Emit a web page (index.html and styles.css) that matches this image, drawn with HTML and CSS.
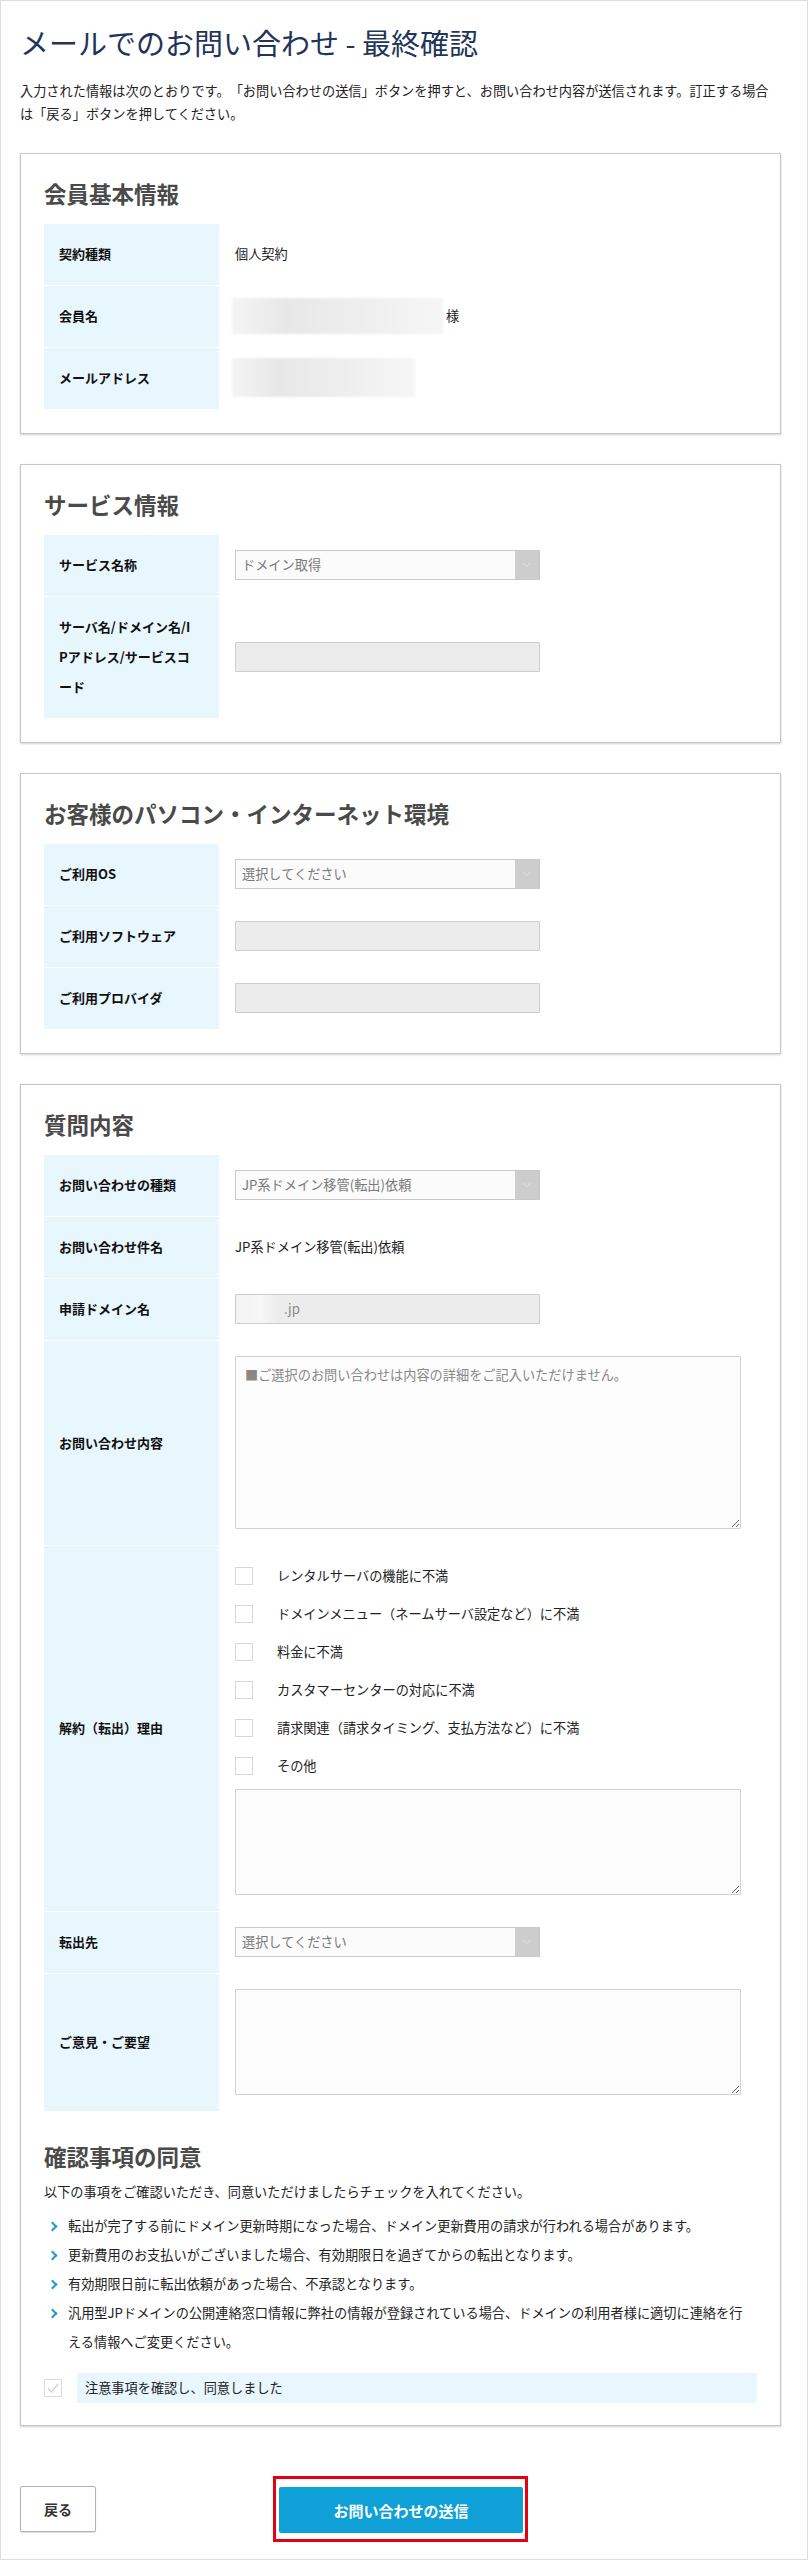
FILE: index.html
```html
<!DOCTYPE html>
<html lang="ja">
<head>
    <meta charset="UTF-8">
    <meta name="viewport" content="width=device-width, initial-scale=1.0">
    <title>メールでのお問い合わせ - 最終確認</title>
    <link rel="stylesheet" href="styles.css">
</head>
<body>
<div class="page">
    <h1 class="page-title">メールでのお問い合わせ - 最終確認</h1>
    <p class="lead">入力された情報は次のとおりです。「お問い合わせの送信」ボタンを押すと、お問い合わせ内容が送信されます。訂正する場合は「戻る」ボタンを押してください。</p>

    <section class="panel">
        <h2>会員基本情報</h2>
        <div class="form-table">
            <div class="label">契約種類</div>
            <div class="value">個人契約</div>
            <div class="label">会員名</div>
            <div class="value"><span class="masked masked-name"></span>様</div>
            <div class="label">メールアドレス</div>
            <div class="value"><span class="masked masked-mail"></span></div>
        </div>
    </section>

    <section class="panel">
        <h2>サービス情報</h2>
        <div class="form-table">
            <div class="label">サービス名称</div>
            <div class="value">
                <div class="select"><span class="select-text">ドメイン取得</span><span class="select-arrow"><svg width="24" height="28" viewBox="0 0 24 28"><polyline points="8.5,12 12,15.5 15.5,12" fill="none" stroke="#e4e4e4" stroke-width="1"/></svg></span></div>
            </div>
            <div class="label">サーバ名/ドメイン名/IPアドレス/サービスコード</div>
            <div class="value"><input class="input" type="text" disabled></div>
        </div>
    </section>

    <section class="panel">
        <h2>お客様のパソコン・インターネット環境</h2>
        <div class="form-table">
            <div class="label">ご利用OS</div>
            <div class="value">
                <div class="select"><span class="select-text">選択してください</span><span class="select-arrow"><svg width="24" height="28" viewBox="0 0 24 28"><polyline points="8.5,12 12,15.5 15.5,12" fill="none" stroke="#e4e4e4" stroke-width="1"/></svg></span></div>
            </div>
            <div class="label">ご利用ソフトウェア</div>
            <div class="value"><input class="input" type="text" disabled></div>
            <div class="label">ご利用プロバイダ</div>
            <div class="value"><input class="input" type="text" disabled></div>
        </div>
    </section>

    <section class="panel">
        <h2>質問内容</h2>
        <div class="form-table">
            <div class="label">お問い合わせの種類</div>
            <div class="value">
                <div class="select"><span class="select-text">JP系ドメイン移管(転出)依頼</span><span class="select-arrow"><svg width="24" height="28" viewBox="0 0 24 28"><polyline points="8.5,12 12,15.5 15.5,12" fill="none" stroke="#e4e4e4" stroke-width="1"/></svg></span></div>
            </div>
            <div class="label">お問い合わせ件名</div>
            <div class="value">JP系ドメイン移管(転出)依頼</div>
            <div class="label">申請ドメイン名</div>
            <div class="value">
                <div class="input domain"><span class="masked-domain"></span><span>.jp</span></div>
            </div>
            <div class="label">お問い合わせ内容</div>
            <div class="value">
                <textarea class="textarea textarea-tall" readonly>■ご選択のお問い合わせは内容の詳細をご記入いただけません。</textarea>
            </div>
            <div class="label">解約（転出）理由</div>
            <div class="value stack">
                <ul class="check-list">
                    <li><span class="check"></span>レンタルサーバの機能に不満</li>
                    <li><span class="check"></span>ドメインメニュー（ネームサーバ設定など）に不満</li>
                    <li><span class="check"></span>料金に不満</li>
                    <li><span class="check"></span>カスタマーセンターの対応に不満</li>
                    <li><span class="check"></span>請求関連（請求タイミング、支払方法など）に不満</li>
                    <li><span class="check"></span>その他</li>
                </ul>
                <textarea class="textarea" readonly></textarea>
            </div>
            <div class="label">転出先</div>
            <div class="value">
                <div class="select"><span class="select-text">選択してください</span><span class="select-arrow"><svg width="24" height="28" viewBox="0 0 24 28"><polyline points="8.5,12 12,15.5 15.5,12" fill="none" stroke="#e4e4e4" stroke-width="1"/></svg></span></div>
            </div>
            <div class="label">ご意見・ご要望</div>
            <div class="value"><textarea class="textarea" readonly></textarea></div>
        </div>

        <h2 class="sub-title">確認事項の同意</h2>
        <p class="note">以下の事項をご確認いただき、同意いただけましたらチェックを入れてください。</p>
        <ul class="arrow-list">
            <li>転出が完了する前にドメイン更新時期になった場合、ドメイン更新費用の請求が行われる場合があります。</li>
            <li>更新費用のお支払いがございました場合、有効期限日を過ぎてからの転出となります。</li>
            <li>有効期限日前に転出依頼があった場合、不承認となります。</li>
            <li>汎用型JPドメインの公開連絡窓口情報に弊社の情報が登録されている場合、ドメインの利用者様に適切に連絡を行える情報へご変更ください。</li>
        </ul>
        <div class="agree">
            <span class="agree-box"><svg width="18" height="18" viewBox="0 0 18 18"><polyline points="4,9.5 7.5,13 14,5" fill="none" stroke="#cfcfcf" stroke-width="1.2"/></svg></span>
            <span class="agree-text">注意事項を確認し、同意しました</span>
        </div>
    </section>

    <div class="actions">
        <button class="btn-back" type="button">戻る</button>
        <div class="submit-frame">
            <button class="btn-submit" type="submit">お問い合わせの送信</button>
        </div>
    </div>
</div>
</body>
</html>
```

FILE: styles.css
```css
body {
    margin: 0;
    font-family: "Noto Sans CJK JP", "Noto Sans", sans-serif;
    color: #222;
    background: #fff;
    text-spacing-trim: space-all;
}
.page {
    border: 1px solid #dedede;
    padding: 20px 26px 17px 19px;
}
.page-title {
    margin: 0;
    font-size: 29px;
    font-weight: normal;
    line-height: 42px;
    color: #1f3559;
}
.lead {
    margin: 16px 0 0;
    font-size: 13.2px;
    line-height: 23px;
}
.panel {
    margin-top: 28px;
    padding: 24px 23px 22px;
    border: 1px solid #c6c6c6;
    box-shadow: 0 1px 2px rgba(0, 0, 0, 0.18);
}
.panel + .panel {
    margin-top: 30px;
}
.panel h2 {
    margin: 0 0 16px;
    font-size: 22.5px;
    font-weight: bold;
    line-height: 30px;
    color: #4a4a4a;
}
.panel .form-table:last-child {
    margin-bottom: 2px;
}
.form-table {
    display: grid;
    grid-template-columns: 175px 1fr;
    row-gap: 1px;
}
.label {
    display: flex;
    align-items: center;
    padding: 15px 22px 16px 15px;
    background: #e8f6fd;
    font-size: 13px;
    font-weight: bold;
    line-height: 30px;
    color: #111;
    word-break: break-all;
}
.value {
    display: flex;
    align-items: center;
    padding: 15px 0 16px 16px;
    min-height: 30px;
    font-size: 13.2px;
    line-height: 30px;
}
.value.stack {
    display: block;
    padding-top: 11px;
}
.masked {
    display: inline-block;
    background: linear-gradient(90deg, #f4f4f4 0%, #e8e8e8 25%, #eeeeee 60%, #f6f6f6 100%);
    filter: blur(1px);
}
.masked-name {
    width: 211px;
    height: 36px;
    margin: -3px 3px -3px -3px;
}
.masked-mail {
    width: 183px;
    height: 39px;
    margin: -5px 0 -4px -3px;
}
.select {
    display: flex;
    width: 305px;
    height: 30px;
    box-sizing: border-box;
    border: 1px solid #c9c9c9;
    background: #fbfbfb;
}
.select-text {
    flex: 1;
    padding-left: 6px;
    line-height: 28px;
    font-size: 13.2px;
    color: #7a7a7a;
}
.select-arrow {
    width: 24px;
    background: #cdcdcd;
    line-height: 0;
}
.input {
    display: block;
    width: 305px;
    height: 30px;
    box-sizing: border-box;
    margin: 0;
    border: 1px solid #cdcdcd;
    border-radius: 1px;
    background: #ececec;
}
.domain {
    display: flex;
    align-items: center;
    font-size: 13.2px;
    color: #888;
}
.masked-domain {
    width: 42px;
    height: 100%;
    margin-right: 6px;
    background: linear-gradient(90deg, #f3f3f3, #f7f7f7 60%, #ececec);
}
.textarea {
    display: block;
    width: 506px;
    height: 106px;
    box-sizing: border-box;
    margin: 0;
    padding: 8px 9px;
    border: 1px solid #d0d0d0;
    border-radius: 1px;
    background: #fcfcfc;
    font-family: inherit;
    font-size: 13.2px;
    line-height: 20px;
    color: #888;
    resize: vertical;
}
.textarea-tall {
    height: 173px;
}
.check-list {
    list-style: none;
    margin: 0 0 4px;
    padding: 0;
}
.check-list li {
    display: flex;
    align-items: center;
    height: 38px;
}
.check {
    flex: none;
    width: 18px;
    height: 18px;
    box-sizing: border-box;
    margin-right: 24px;
    border: 1px solid #d8d8d8;
    background: #fff;
}
.panel .sub-title {
    margin: 30px 0 8px;
}
.note {
    margin: 0;
    font-size: 13.2px;
    line-height: 26px;
}
.arrow-list {
    list-style: none;
    margin: 6px 0 0;
    padding: 0 8px 0 0;
}
.arrow-list li {
    display: flex;
    font-size: 13.2px;
    line-height: 29px;
}
.arrow-list li::before {
    content: "";
    flex: none;
    width: 5px;
    height: 5px;
    margin: 12px 12px 0 5px;
    border-top: 2px solid #1a9ad6;
    border-right: 2px solid #1a9ad6;
    transform: rotate(45deg);
}
.agree {
    display: flex;
    align-items: center;
    gap: 15px;
    margin-top: 17px;
}
.agree-box {
    flex: none;
    width: 18px;
    height: 18px;
    box-sizing: border-box;
    border: 1px solid #dcdcdc;
    line-height: 0;
}
.agree-box svg {
    margin: -1px 0 0 -1px;
}
.agree-text {
    flex: 1;
    padding-left: 8px;
    background: #e8f6fd;
    font-size: 13.2px;
    line-height: 30px;
}
.actions {
    display: grid;
    grid-template-columns: 1fr auto 1fr;
    align-items: center;
    margin-top: 50px;
}
.btn-back {
    justify-self: start;
    width: 76px;
    height: 46px;
    border: 1px solid #b3b3b3;
    border-radius: 2px;
    background: #fff;
    box-shadow: 0 1px 1px rgba(0, 0, 0, 0.15);
    font-family: inherit;
    font-size: 14px;
    font-weight: bold;
    color: #333;
}
.submit-frame {
    padding: 8px 2px 6px 3px;
    border: 3px solid #e50012;
    line-height: 0;
}
.btn-submit {
    width: 244px;
    height: 46px;
    border: none;
    border-radius: 2px;
    background: #0fa0d7;
    font-family: inherit;
    font-size: 15px;
    font-weight: bold;
    color: #fff;
}
```
